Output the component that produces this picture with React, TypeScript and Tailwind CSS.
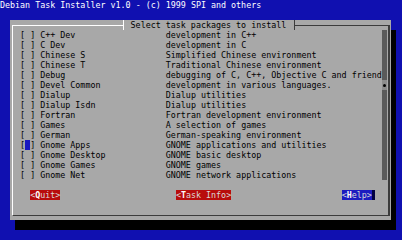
import React from "react";

// ── Data
const tasks: [string, string][] = [
  ["C++ Dev", "development in C++"],
  ["C Dev", "development in C"],
  ["Chinese S", "Simplified Chinese environment"],
  ["Chinese T", "Traditional Chinese environment"],
  ["Debug", "debugging of C, C++, Objective C and friend"],
  ["Devel Common", "development in various languages."],
  ["Dialup", "Dialup utilities"],
  ["Dialup Isdn", "Dialup utilities"],
  ["Fortran", "Fortran development environment"],
  ["Games", "A selection of games"],
  ["German", "German-speaking environment"],
  ["Gnome Apps", "GNOME applications and utilities"],
  ["Gnome Desktop", "GNOME basic desktop"],
  ["Gnome Games", "GNOME games"],
  ["Gnome Net", "GNOME network applications"],
];

const CURSOR_ROW = 11;
const THUMB_ROW = 5;

function TaskRow({ name, desc, active }: { name: string; desc: string; active: boolean }) {
  return (
    <div className="h-[10px] flex whitespace-pre">
      <div className="w-[20.1px] shrink-0 flex">
        <span className="w-[5.025px]">[</span>
        <span className={active ? "w-[5.025px] bg-[#1818c0]" : "w-[5.025px]"}> </span>
        <span className="w-[5.025px]">]</span>
      </div>
      <div className="w-[125.6px] shrink-0">{name}</div>
      <div className="flex-1">{desc}</div>
    </div>
  );
}

function Button({ hot, rest, className }: { hot: string; rest: string; className: string }) {
  return (
    <div className={`h-[10px] shrink-0 whitespace-pre text-[#d8d8d8] ${className}`}>
      {"<"}
      <span className="font-bold text-white">{hot}</span>
      {rest}
      {">"}
    </div>
  );
}

export default function App() {
  return (
    <div className="w-[402px] h-[240px] overflow-hidden bg-[#1010b0] font-['DejaVu_Sans_Mono',monospace] text-[8.35px] leading-[10px]">
      {/* Screen title */}
      <div className="h-[10px] whitespace-pre text-white">
        Debian Task Installer v1.0 - (c) 1999 SPI and others
      </div>
      <div className="h-[10px]" />

      {/* Dialog */}
      <div className="ml-[10px] w-[381px] h-[200px] bg-[#a8a8a8] text-black shadow-[5px_10px_0_0_#000] flex flex-col">
        {/* Top border with title */}
        <div className="h-[10px] flex shrink-0">
          <div className="w-[2px] shrink-0" />
          <div className="w-[111px] h-[5px] mt-[5px] border-t border-l border-white shrink-0" />
          <div className="w-px h-[10px] bg-white shrink-0" />
          <div className="w-[170px] pl-[6.6px] whitespace-pre shrink-0">Select task packages to install</div>
          <div className="w-px h-[10px] bg-[#3c3c3c] shrink-0" />
          <div className="w-[95px] h-[5px] mt-[5px] border-t border-r-2 border-[#3c3c3c] shrink-0" />
        </div>

        {/* Body */}
        <div className="h-[180px] flex shrink-0">
          <div className="w-[2px] shrink-0" />
          <div className="w-[378px] shrink-0 border-l border-white border-r-2 border-r-[#3c3c3c] flex flex-col">
            {/* Task list + scrollbar */}
            <div className="h-[150px] flex pl-[7.1px]">
              <div className="w-[361.8px] shrink-0 flex flex-col">
                {tasks.map(([name, desc], i) => (
                  <TaskRow key={name} name={name} desc={desc} active={i === CURSOR_ROW} />
                ))}
              </div>
              <div className="w-[5px] shrink-0 flex flex-col bg-[#5a5a5a]">
                {tasks.map(([name], i) => (
                  <div
                    key={name}
                    className={
                      i === THUMB_ROW
                        ? "h-[10px] bg-[#8c8c8c] flex items-center justify-center"
                        : "h-[10px]"
                    }
                  >
                    {i === THUMB_ROW && <div className="w-[3px] h-[3px] rounded-full bg-black" />}
                  </div>
                ))}
              </div>
            </div>

            <div className="h-[10px]" />

            {/* Buttons */}
            <div className="h-[10px] flex pl-[17.15px]">
              <Button hot="Q" rest="uit" className="w-[30.15px] bg-[#b80c0c]" />
              <div className="w-[115.6px] shrink-0" />
              <Button hot="T" rest="ask Info" className="w-[55.3px] bg-[#b80c0c]" />
              <div className="w-[110.5px] shrink-0" />
              <Button hot="H" rest="elp" className="w-[30.15px] bg-[#1c1cc0]" />
              <div className="w-[3px] h-[10px] bg-[#000040] shrink-0" />
            </div>

            <div className="h-[10px]" />
          </div>
        </div>

        {/* Bottom border */}
        <div className="h-[10px] flex shrink-0">
          <div className="w-[2px] shrink-0" />
          <div className="w-[378px] h-[6px] border-l border-white border-b border-r-2 border-b-[#3c3c3c] border-r-[#3c3c3c] shrink-0" />
        </div>
      </div>
    </div>
  );
}
